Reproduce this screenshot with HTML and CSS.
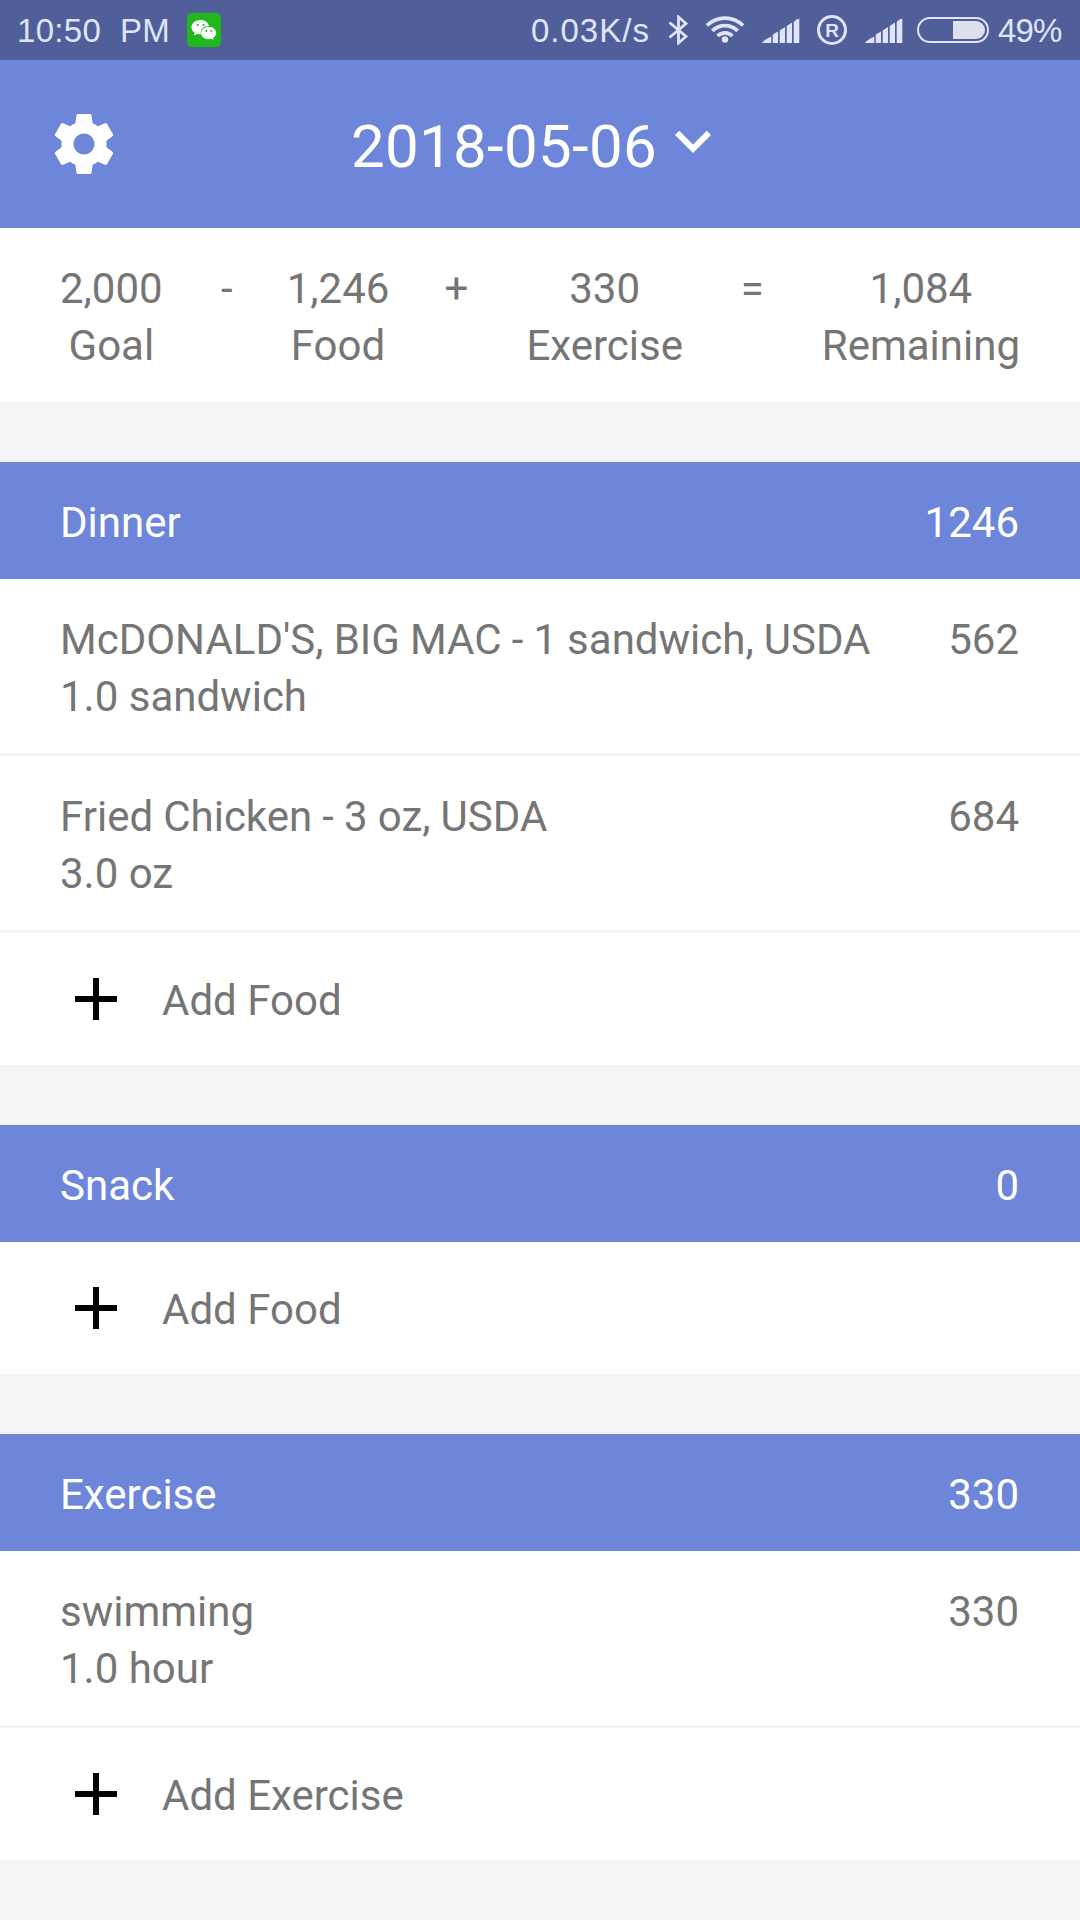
FILE: index.html
```html
<!DOCTYPE html>
<html lang="en">
<head>
<meta charset="utf-8">
<title>Food diary</title>
<link rel="stylesheet" href="styles.css">
</head>
<body>
<svg class="defs" aria-hidden="true">
  <symbol id="plus" viewBox="0 0 24 24"><path d="M19 13h-6v6h-2v-6H5v-2h6V5h2v6h6v2z"/></symbol>
  <symbol id="signal" viewBox="0 0 38 26"><path d="M0 25C2 22 5 20.500 9.300 18.500V25zM10.800 25V16.500L16 13.500V25zM17.700 25V12.500L23 9V25zM24.700 25V8L30 4.500V25zM31.700 25V4Q34 1 37.300 0.500V25z"/></symbol>
</svg>
<div class="status">
  <span class="clock">10:50&nbsp; PM</span>
  <svg class="wechat" viewBox="0 0 34 34">
    <rect width="34" height="34" rx="5" fill="#21b81b"/>
    <path fill="#fff" d="M13.500 7C8.500 7 4.500 10.200 4.500 14.200c0 2.400 1.200 4.300 3.200 5.600L7 22.500l3.200-1.600c1.200.3 2.500.5 4 .4C12.500 16.500 16.500 12.500 22 13c-.8-3.600-4.200-6-8.500-6z"/>
    <path fill="#fff" d="M21.700 13.800c-4.200 0-7.500 2.700-7.500 6.200s3.300 6.200 7.500 6.200c.9 0 1.800-.2 2.600-.4l2.400 1.300-.7-2.200c1.900-1.200 3.200-2.900 3.200-4.900 0-3.400-3.400-6.200-7.500-6.200z"/>
    <g fill="#21b81b"><circle cx="10.700" cy="12" r="1.100"/><circle cx="16.500" cy="12" r="1.100"/><circle cx="19.300" cy="18" r=".9"/><circle cx="24.200" cy="18" r=".9"/></g>
  </svg>
  <span class="speed">0.03K/s</span>
  <svg class="bluetooth" viewBox="0 0 20 30"><path d="M1.500 7.500L18 21.500 10.500 28V2L18 8.500 1.500 22.500" fill="none" stroke="currentColor" stroke-width="2.800"/></svg>
  <svg class="wifi" viewBox="0 0 40 28"><g fill="none" stroke="currentColor" stroke-width="3.800"><path d="M2 10.500a25.500 25.500 0 0 1 36 0"/><path d="M7.300 15.800a18 18 0 0 1 25.400 0"/><path d="M12.600 21a10.500 10.500 0 0 1 14.800 0"/></g><circle cx="20" cy="24.500" r="3.200"/></svg>
  <svg class="signal signal-a"><use href="#signal"/></svg>
  <span class="roaming">R</span>
  <svg class="signal signal-b"><use href="#signal"/></svg>
  <span class="battery"><span class="charge"></span></span>
  <span class="percent">49%</span>
</div>
<header class="appbar">
  <svg class="gear" viewBox="0 0 24 24"><path d="M19.430 12.980c.04-.32.07-.64.07-.98s-.03-.66-.07-.98l2.110-1.650c.19-.15.24-.42.12-.64l-2-3.460c-.12-.22-.39-.3-.61-.22l-2.490 1c-.52-.4-1.080-.73-1.690-.98l-.38-2.650C14.460 2.180 14.250 2 14 2h-4c-.25 0-.46.18-.49.42l-.38 2.650c-.61.25-1.170.59-1.690.98l-2.490-1c-.23-.09-.49 0-.61.22l-2 3.460c-.13.22-.07.49.12.64l2.110 1.650c-.04.32-.07.65-.07.98s.03.66.07.98l-2.110 1.650c-.19.15-.24.42-.12.64l2 3.460c.12.22.39.3.61.22l2.490-1c.52.4 1.080.73 1.690.98l.38 2.650c.03.24.24.42.49.42h4c.25 0 .46-.18.49-.42l.38-2.650c.61-.25 1.170-.59 1.690-.98l2.490 1c.23.09.49 0 .61-.22l2-3.460c.12-.22.07-.49-.12-.64l-2.110-1.650zM12 15.500c-1.930 0-3.500-1.570-3.500-3.500s1.570-3.500 3.500-3.500 3.500 1.570 3.500 3.500-1.570 3.500-3.500 3.500z"/></svg>
  <span class="date">2018-05-06</span>
  <svg class="chevron" viewBox="0 0 24 24"><path d="M16.590 8.590L12 13.170 7.410 8.590 6 10l6 6 6-6z"/></svg>
</header>
<section class="summary">
  <div><p>2,000</p><p>Goal</p></div>
  <p class="minus">-</p>
  <div><p>1,246</p><p>Food</p></div>
  <p class="plus-sign">+</p>
  <div><p>330</p><p>Exercise</p></div>
  <p>=</p>
  <div><p>1,084</p><p>Remaining</p></div>
</section>
<section class="group">
  <h2 class="heading"><span>Dinner</span><span>1246</span></h2>
  <div class="item"><div><p class="name">McDONALD'S, BIG MAC - 1 sandwich, USDA</p><p>1.0 sandwich</p></div><p>562</p></div>
  <div class="item"><div><p class="name">Fried Chicken - 3 oz, USDA</p><p>3.0 oz</p></div><p>684</p></div>
  <div class="add"><svg class="plus"><use href="#plus"/></svg><span>Add Food</span></div>
</section>
<section class="group">
  <h2 class="heading"><span>Snack</span><span>0</span></h2>
  <div class="add"><svg class="plus"><use href="#plus"/></svg><span>Add Food</span></div>
</section>
<section class="group">
  <h2 class="heading"><span>Exercise</span><span>330</span></h2>
  <div class="item"><div><p class="name">swimming</p><p>1.0 hour</p></div><p>330</p></div>
  <div class="add"><svg class="plus"><use href="#plus"/></svg><span>Add Exercise</span></div>
</section>
</body>
</html>
```
FILE: styles.css
```css
* { box-sizing: border-box; margin: 0; padding: 0; }
body {
  width: 1080px;
  height: 1920px;
  overflow: hidden;
  background: #f4f4f4;
  color: #757575;
  font: 42px/57px Roboto, sans-serif;
}
svg { display: block; flex: none; fill: currentColor; }
.defs { display: none; }

.status {
  display: flex;
  align-items: flex-start;
  height: 60px;
  padding-left: 17px;
  background: #505f9a;
  color: #dfe4fa;
  font: 33px/38px "Liberation Sans", sans-serif;
  white-space: nowrap;
}
.status span { flex: none; }
.clock, .speed, .percent { margin-top: 12px; }
.clock { width: 170px; letter-spacing: 0.3px; }
.wechat { width: 34px; height: 34px; margin-top: 13px; }
.speed { width: 136px; margin-left: 310px; letter-spacing: 1px; }
.bluetooth { width: 20px; height: 30px; margin: 15px 0 0 1px; }
.wifi { width: 40px; height: 28px; margin: 15px 0 0 17px; }
.signal { width: 38px; height: 26px; margin-top: 18px; }
.signal-a { margin-left: 17px; }
.roaming {
  width: 30px;
  height: 30px;
  margin: 15px 18px 0 17px;
  border: 3px solid;
  border-radius: 50%;
  font: bold 19px/25px "Liberation Sans", sans-serif;
  text-align: center;
}
.battery {
  width: 72px;
  height: 26px;
  margin: 17px 9px 0 14px;
  padding: 2px;
  border: 2px solid;
  border-radius: 13px;
}
.charge { display: block; width: 32px; height: 18px; margin-left: auto; border-radius: 0 9px 9px 0; background: #dddfec; }
.percent { letter-spacing: -0.8px; }

.appbar {
  display: flex;
  align-items: center;
  height: 168px;
  padding-left: 48px;
  background: #6d86d9;
  color: #fff;
}
.gear { width: 72px; height: 72px; }
.date { width: 306px; margin: 4px 0 0 231px; font-size: 60px; letter-spacing: 0.3px; }
.chevron { width: 72px; height: 72px; margin-bottom: 6px; }

.summary {
  display: grid;
  grid-template-columns: auto 124px auto 137px auto 1fr auto;
  height: 174px;
  padding: 32px 60px 28px;
  background: #fff;
  text-align: center;
}
.minus { padding-left: 4px; }
.plus-sign { padding-right: 3px; }
.group { margin-top: 60px; background: #fff; }
.heading {
  display: flex;
  justify-content: space-between;
  height: 117px;
  padding: 32px 61px 28px 60px;
  background: #6d86d9;
  color: #fff;
  font: inherit;
}
.item {
  display: flex;
  justify-content: space-between;
  height: 177px;
  padding: 32px 61px 28px 60px;
  border-bottom: 3px solid #f4f4f4;
}
.name { word-spacing: -0.3px; }
.add { display: flex; align-items: center; gap: 30px; height: 132px; padding: 0 60px; }
.add span { padding-top: 3px; }
.plus { width: 72px; height: 72px; color: #000; }
```
